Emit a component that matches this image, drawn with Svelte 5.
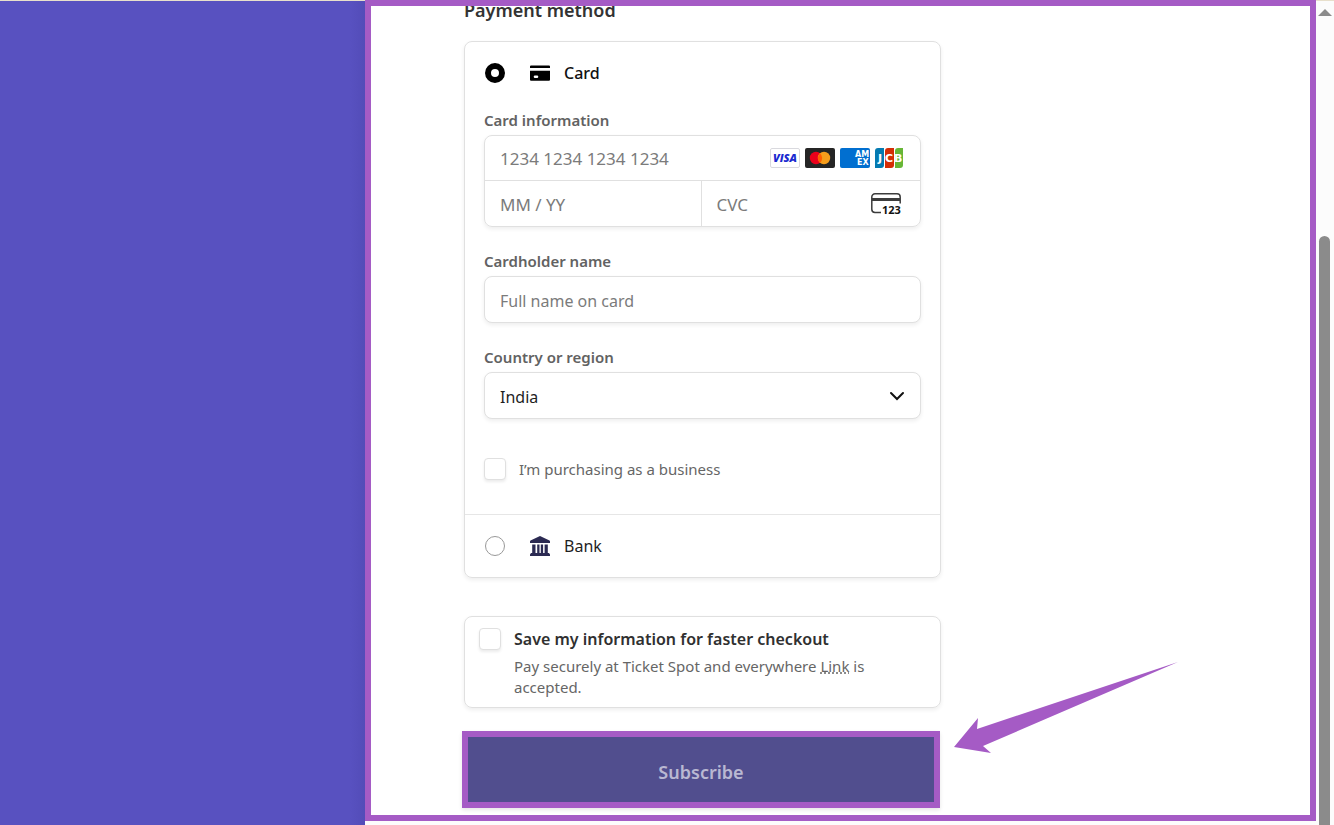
<script lang="ts">
	// ============================================================================
	// STATE
	// ============================================================================

	let method = $state<'card' | 'bank'>('card');
	let cardNumber = $state('');
	let expiry = $state('');
	let cvc = $state('');
	let holder = $state('');
	let country = $state('India');
	let business = $state(false);
	let saveInfo = $state(false);

	const countries = ['India', 'Ireland', 'United Kingdom', 'United States'];
</script>

<div class="page">
	<aside class="summary"></aside>

	<main class="frame">
		<form class="checkout" onsubmit={(e) => e.preventDefault()}>
			<h2>Payment method</h2>

			<section class="panel">
				<div class="card-method">
					<label class="method">
						<input type="radio" name="method" value="card" bind:group={method} />
						<svg class="method-icon" viewBox="0 0 20 20" aria-hidden="true">
							<path d="M1 2.5h18a1 1 0 0 1 1 1v1.4H0V3.500a1 1 0 0 1 1-1z" />
							<path
								fill-rule="evenodd"
								d="M0 7.700h20v9a1 1 0 0 1-1 1H1a1 1 0 0 1-1-1zM5 12.500a1.300 1.300 0 0 0 0 2.600h2a1.300 1.300 0 0 0 0-2.600z"
							/>
						</svg>
						<span class="strong">Card</span>
					</label>

					<fieldset>
						<legend>Card information</legend>
						<div class="box">
							<div class="cell number">
								<input
									type="text"
									aria-label="Card number"
									placeholder="1234 1234 1234 1234"
									bind:value={cardNumber}
								/>
								<div class="brands" aria-hidden="true">
									<svg class="brand" viewBox="0 0 30 20">
										<rect x="0.5" y="0.5" width="29" height="19" rx="1.500" fill="#fff" stroke="#d9d9de" />
										<text x="15" y="14" text-anchor="middle" class="visa">VISA</text>
									</svg>
									<svg class="brand" viewBox="0 0 30 20">
										<rect width="30" height="20" rx="2" fill="#252525" />
										<circle cx="11" cy="10" r="6.200" fill="#eb001b" />
										<circle cx="19" cy="10" r="6.200" fill="#f79e1b" />
										<path d="M15 5.260a6.200 6.200 0 0 1 0 9.480 6.200 6.200 0 0 1 0-9.480z" fill="#ff5f00" />
									</svg>
									<svg class="brand" viewBox="0 0 30 20">
										<rect width="30" height="20" rx="2" fill="#016fd0" />
										<text x="15" y="9" class="amex">AM</text>
										<text x="17" y="17" class="amex">EX</text>
									</svg>
									<svg class="brand" viewBox="0 0 30 20">
										<path d="M3 0h6v17a3 3 0 0 1-3 3H0V3a3 3 0 0 1 3-3z" fill="#047ab1" />
										<path d="M13 0h6v17a3 3 0 0 1-3 3h-6V3a3 3 0 0 1 3-3z" fill="#d42d06" />
										<path d="M23 0h5v17a3 3 0 0 1-3 3h-5V3a3 3 0 0 1 3-3z" fill="#67b637" />
										<text x="3" y="14" class="jcb">J</text>
										<text x="10" y="14" class="jcb">C</text>
										<text x="19" y="14" class="jcb">B</text>
									</svg>
								</div>
							</div>
							<div class="cell">
								<input type="text" aria-label="Expiration" placeholder="MM / YY" bind:value={expiry} />
							</div>
							<div class="cell cvc">
								<input type="text" aria-label="CVC" placeholder="CVC" bind:value={cvc} />
								<svg class="cvc-icon" viewBox="0 0 30 22" aria-hidden="true">
									<path
										d="M10 19.500H4A3.200 3.200 0 0 1 0.800 16.300V4A3.200 3.200 0 0 1 4 0.800h22A3.200 3.200 0 0 1 29.200 4v6.500"
										fill="none"
										stroke="#3c3c3c"
										stroke-width="1.500"
									/>
									<rect x="1" y="5" width="28" height="3" fill="#3c3c3c" />
									<text x="11" y="20.500" class="digits">123</text>
								</svg>
							</div>
						</div>
					</fieldset>

					<div class="field">
						<label for="holder">Cardholder name</label>
						<input id="holder" class="control" type="text" placeholder="Full name on card" bind:value={holder} />
					</div>

					<div class="field">
						<label for="country">Country or region</label>
						<div class="select">
							<select id="country" class="control" bind:value={country}>
								{#each countries as name}
									<option value={name}>{name}</option>
								{/each}
							</select>
							<svg class="chevron" viewBox="0 0 16 10" aria-hidden="true">
								<path d="M2 2l6 6 6-6" fill="none" stroke="#111" stroke-width="2" stroke-linecap="round" />
							</svg>
						</div>
					</div>

					<label class="business">
						<input type="checkbox" bind:checked={business} />
						<span>I’m purchasing as a business</span>
					</label>
				</div>

				<label class="method bank">
					<input type="radio" name="method" value="bank" bind:group={method} />
					<svg class="method-icon navy" viewBox="0 0 20 20" aria-hidden="true">
						<path
							d="M10 0l9.500 4.600q.5.300.5.900V7H0V5.500q0-.6.500-.9zM2.200 8.500H5.500V17H2.200zM7.200 8.500h2.300V17H7.200zM10.800 8.500h2.300V17h-2.300zM14.600 8.500h3.200V17h-3.200zM1 17h18l1 1.500V20H0v-1.500z"
						/>
					</svg>
					<span>Bank</span>
				</label>
			</section>

			<section class="panel save">
				<input id="save" type="checkbox" bind:checked={saveInfo} />
				<div>
					<label for="save">Save my information for faster checkout</label>
					<p>Pay securely at Ticket Spot and everywhere <a href="#link">Link</a> is accepted.</p>
				</div>
			</section>

			<div class="submit">
				<button type="submit">Subscribe</button>
				<svg class="pointer" viewBox="0 0 226 94" aria-hidden="true">
					<path d="M1 87L25 58l-1 11L225 2 30 86l8 7z" fill="#a55bc5" />
				</svg>
			</div>
		</form>
	</main>

	<div class="scrollbar" aria-hidden="true">
		<svg viewBox="0 0 14 7"><path d="M7 0l7 7H0z" fill="#8b8b8b" /></svg>
		<div class="thumb"></div>
	</div>
</div>

<style>
	:global(body) {
		background: #fff;
	}

	.page {
		display: flex;
		min-height: 100vh;
		background: linear-gradient(#e8e0cc 1px, #fcfcfc 1px);
		color: #1f1f1f;
		font-family: 'Noto Sans', 'Open Sans', sans-serif;
		font-size: 16px;
		line-height: 24px;
	}

	.page *,
	.page {
		box-sizing: border-box;
	}

	.summary {
		flex: 0 1 365px;
		margin-top: 1px;
		background: linear-gradient(90deg, #5851c0 96%, #534cb8);
	}

	.frame {
		flex: 1;
		margin-bottom: 4px;
		padding: 0 20px 7px 93px;
		overflow: hidden;
		border: 6px solid #a55bc5;
		background: #fff;
	}

	.checkout {
		max-width: 477px;
	}

	h2 {
		margin: -8px 0 19px;
		color: #333;
		font-size: 18px;
		font-weight: 600;
		line-height: 24px;
	}

	.panel {
		border: 1px solid #e0e0e0;
		border-radius: 8px;
		box-shadow: 0 2px 4px rgba(0, 0, 0, 0.07);
	}

	.card-method {
		padding: 19px 19px 33px;
	}

	.method {
		display: flex;
		align-items: center;
		height: 24px;
		padding-left: 1px;
	}

	.method-icon {
		width: 20px;
		height: 20px;
		margin: 0 14px 0 25px;
	}

	.navy {
		fill: #2b2a52;
	}

	.strong {
		color: #111;
		font-weight: 500;
	}

	.bank {
		height: 63px;
		padding: 0 20px;
		border-top: 1px solid #e6e6e6;
	}

	input[type='radio'],
	input[type='checkbox'] {
		flex: none;
		appearance: none;
		margin: 0;
		background: #fff;
	}

	input[type='radio'] {
		width: 20px;
		height: 20px;
		border: 1px solid #999;
		border-radius: 50%;
	}

	input[type='radio']:checked {
		border: 6px solid #000;
	}

	input[type='checkbox'] {
		width: 22px;
		height: 22px;
		border: 1px solid #e0e0e0;
		border-radius: 4px;
		box-shadow: 0 2px 3px rgba(0, 0, 0, 0.08);
	}

	input[type='checkbox']:checked {
		background: #5851c0;
	}

	fieldset {
		min-width: 0;
		margin: 23px 0 0;
		padding: 0;
		border: 0;
	}

	legend,
	.field label {
		display: block;
		padding: 0;
		margin-bottom: 3px;
		color: #626262;
		font-size: 15px;
		font-weight: 600;
		line-height: 24px;
	}

	.box {
		display: grid;
		grid-template-columns: calc(50% - 2px) minmax(0, 1fr);
		border: 1px solid #e0e0e0;
		border-radius: 8px;
		box-shadow: 0 2px 4px rgba(0, 0, 0, 0.07);
	}

	.cell {
		display: flex;
		align-items: center;
		height: 45px;
		padding: 0 15px;
	}

	.cell input {
		flex: 1;
		min-width: 0;
		padding: 2px 0 0;
		border: 0;
		outline: 0;
		background: none;
		color: inherit;
		font: inherit;
		font-size: 17px;
	}

	input::placeholder {
		color: #7b7b7b;
		opacity: 1;
	}

	.number {
		grid-column: 1 / -1;
		border-bottom: 1px solid #e0e0e0;
	}

	.cvc {
		padding-right: 19px;
		border-left: 1px solid #e0e0e0;
	}

	.brands {
		display: flex;
		gap: 5px;
	}

	.brand {
		width: 30px;
		height: 20px;
	}

	.cvc-icon {
		width: 30px;
		height: 22px;
	}

	.visa,
	.digits {
		font-family: 'Open Sans', sans-serif;
		font-weight: 800;
	}

	.amex,
	.jcb {
		font-family: 'DejaVu Sans', sans-serif;
		font-weight: 700;
	}

	.visa {
		fill: #1a2ad0;
		font-size: 11px;
		font-style: italic;
	}

	.amex {
		fill: #fff;
		font-size: 8px;
	}

	.jcb {
		fill: #fff;
		font-size: 11px;
	}

	.digits {
		fill: #111;
		font-size: 11px;
		font-weight: 700;
	}

	.field {
		margin-top: 22px;
	}

	.control {
		display: block;
		width: 100%;
		height: 47px;
		padding: 2px 15px 0;
		border: 1px solid #e0e0e0;
		border-radius: 8px;
		outline: 0;
		background: #fff;
		box-shadow: 0 2px 4px rgba(0, 0, 0, 0.07);
		color: inherit;
		font: inherit;
		appearance: none;
	}

	.select {
		position: relative;
	}

	.chevron {
		position: absolute;
		top: 19px;
		right: 16px;
		width: 16px;
		height: 10px;
		pointer-events: none;
	}

	.business {
		display: flex;
		align-items: center;
		gap: 13px;
		margin-top: 38px;
		color: #666;
		font-size: 15px;
	}

	.save {
		display: flex;
		gap: 13px;
		margin: 38px 0 23px;
		padding: 10px 14px 9px;
	}

	.save input {
		margin-top: 1px;
	}

	.save label {
		display: block;
		color: #303030;
		font-weight: 600;
	}

	.save p {
		margin: 5px 0 0;
		color: #666;
		font-size: 15px;
		line-height: 21px;
	}

	.save a {
		color: inherit;
		text-decoration: underline dotted;
	}

	.submit {
		position: relative;
		margin: 0 1px 0 -2px;
	}

	button {
		display: block;
		width: 100%;
		height: 77px;
		padding: 4px 0 0;
		border: 6px solid #a55bc5;
		background: #514e8e;
		box-shadow: 0 2px 4px rgba(0, 0, 0, 0.1);
		color: #b9b8d2;
		font: inherit;
		font-size: 18px;
		font-weight: 600;
	}

	.pointer {
		position: absolute;
		bottom: 54px;
		left: calc(100% + 13px);
		width: 226px;
		height: 94px;
	}

	.scrollbar {
		display: flex;
		flex: 0 0 18px;
		flex-direction: column;
		align-items: center;
		padding: 9px 1px 0 0;
	}

	.scrollbar svg {
		width: 14px;
		height: 7px;
	}

	.thumb {
		flex: 1;
		width: 11px;
		margin-top: 220px;
		border-radius: 6px 6px 0 0;
		background: #8b8b8b;
	}
</style>
